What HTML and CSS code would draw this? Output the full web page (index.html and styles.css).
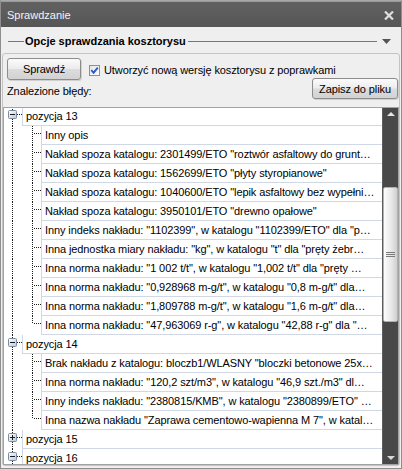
FILE: index.html
```html
<!DOCTYPE html>
<html lang="pl">
<head>
<meta charset="utf-8">
<title>Sprawdzanie</title>
<link rel="stylesheet" href="styles.css">
</head>
<body>
<div class="window">
  <div class="titlebar">
    <span class="title">Sprawdzanie</span>
    <svg class="close" width="10" height="9" viewBox="0 0 10 9"><path d="M1 0.5L9 8.5M9 0.5L1 8.5" stroke="#dedede" stroke-width="2.2"/></svg>
  </div>
  <div class="content">
    <div class="group-head">
      <span class="gline short"></span>
      <span class="gtitle">Opcje sprawdzania kosztorysu</span>
      <span class="gline long"></span>
      <svg class="garrow" width="9" height="5" viewBox="0 0 9 5"><path d="M0 0H9L4.5 5Z" fill="#555"/></svg>
    </div>
    <div class="panel">
      <div class="toolbar">
        <button class="btn btn-check">Sprawdź</button>
        <label class="chk">
          <span class="box"><svg width="9" height="9" viewBox="0 0 9 9"><path d="M1.3 4.2L3.6 6.7L7.8 1.6" fill="none" stroke="#2a5cc4" stroke-width="1.9"/></svg></span>
          <span>Utworzyć nową wersję kosztorysu z poprawkami</span>
        </label>
      </div>
      <div class="row2">
        <span class="found">Znalezione błędy:</span>
        <button class="btn btn-save">Zapisz do pliku</button>
      </div>
      <div class="tree">
        <div class="rows-clip">
          <div class="rows">
            <div class="row"><span class="g0 node"><svg class="exp" width="9" height="9" viewBox="0 0 9 9"><defs><linearGradient id="e1" x1="0" y1="0" x2="1" y2="1"><stop offset="0" stop-color="#fff"/><stop offset="1" stop-color="#bcc7d5"/></linearGradient></defs><rect x=".5" y=".5" width="8" height="8" rx="1" fill="url(#e1)" stroke="#7b8ca3"/><path d="M2 4.5h5" stroke="#1a1a1a"/></svg></span><span class="cell">pozycja 13</span></div>
            <div class="row"><span class="g0"></span><span class="g1"></span><span class="cell">Inny opis</span></div>
            <div class="row"><span class="g0"></span><span class="g1"></span><span class="cell">Nakład spoza katalogu: 2301499/ETO "roztwór asfaltowy do grunt…</span></div>
            <div class="row"><span class="g0"></span><span class="g1"></span><span class="cell">Nakład spoza katalogu: 1562699/ETO "płyty styropianowe"</span></div>
            <div class="row"><span class="g0"></span><span class="g1"></span><span class="cell">Nakład spoza katalogu: 1040600/ETO "lepik asfaltowy bez wypełni…</span></div>
            <div class="row"><span class="g0"></span><span class="g1"></span><span class="cell">Nakład spoza katalogu: 3950101/ETO "drewno opałowe"</span></div>
            <div class="row"><span class="g0"></span><span class="g1"></span><span class="cell">Inny indeks nakładu: "1102399", w katalogu "1102399/ETO" dla "p…</span></div>
            <div class="row"><span class="g0"></span><span class="g1"></span><span class="cell">Inna jednostka miary nakładu: "kg", w katalogu "t" dla "pręty żebr…</span></div>
            <div class="row"><span class="g0"></span><span class="g1"></span><span class="cell">Inna norma nakładu: "1 002 t/t", w katalogu "1,002 t/t" dla "pręty …</span></div>
            <div class="row"><span class="g0"></span><span class="g1"></span><span class="cell">Inna norma nakładu: "0,928968 m-g/t", w katalogu "0,8 m-g/t" dla…</span></div>
            <div class="row"><span class="g0"></span><span class="g1"></span><span class="cell">Inna norma nakładu: "1,809788 m-g/t", w katalogu "1,6 m-g/t" dla…</span></div>
            <div class="row"><span class="g0"></span><span class="g1 last"></span><span class="cell">Inna norma nakładu: "47,963069 r-g", w katalogu "42,88 r-g" dla "…</span></div>
            <div class="row"><span class="g0 node"><svg class="exp" width="9" height="9" viewBox="0 0 9 9"><defs><linearGradient id="e2" x1="0" y1="0" x2="1" y2="1"><stop offset="0" stop-color="#fff"/><stop offset="1" stop-color="#bcc7d5"/></linearGradient></defs><rect x=".5" y=".5" width="8" height="8" rx="1" fill="url(#e2)" stroke="#7b8ca3"/><path d="M2 4.5h5" stroke="#1a1a1a"/></svg></span><span class="cell">pozycja 14</span></div>
            <div class="row"><span class="g0"></span><span class="g1"></span><span class="cell">Brak nakładu z katalogu: bloczb1/WLASNY "bloczki betonowe 25x2…</span></div>
            <div class="row"><span class="g0"></span><span class="g1"></span><span class="cell">Inna norma nakładu: "120,2 szt/m3", w katalogu "46,9 szt./m3" dl…</span></div>
            <div class="row"><span class="g0"></span><span class="g1"></span><span class="cell">Inny indeks nakładu: "2380815/KMB", w katalogu "2380899/ETO" …</span></div>
            <div class="row"><span class="g0"></span><span class="g1 last"></span><span class="cell">Inna nazwa nakładu "Zaprawa cementowo-wapienna M 7", w katal…</span></div>
            <div class="row"><span class="g0 node"><svg class="exp" width="9" height="9" viewBox="0 0 9 9"><defs><linearGradient id="e3" x1="0" y1="0" x2="1" y2="1"><stop offset="0" stop-color="#fff"/><stop offset="1" stop-color="#bcc7d5"/></linearGradient></defs><rect x=".5" y=".5" width="8" height="8" rx="1" fill="url(#e3)" stroke="#7b8ca3"/><path d="M2 4.5h5M4.5 2v5" stroke="#1a1a1a"/></svg></span><span class="cell">pozycja 15</span></div>
            <div class="row"><span class="g0 node"><svg class="exp" width="9" height="9" viewBox="0 0 9 9"><defs><linearGradient id="e4" x1="0" y1="0" x2="1" y2="1"><stop offset="0" stop-color="#fff"/><stop offset="1" stop-color="#bcc7d5"/></linearGradient></defs><rect x=".5" y=".5" width="8" height="8" rx="1" fill="url(#e4)" stroke="#7b8ca3"/><path d="M2 4.5h5" stroke="#1a1a1a"/></svg></span><span class="cell">pozycja 16</span></div>
          </div>
        </div>
        <div class="scrollbar">
          <div class="sb-btn sb-up"><span class="tri-up"></span></div>
          <div class="sb-space1"></div>
          <div class="sb-thumb"><span class="grip"></span></div>
          <div class="sb-space2"></div>
          <div class="sb-btn sb-down"><span class="tri-down"></span></div>
        </div>
      </div>
    </div>
  </div>
</div>
</body>
</html>
```
FILE: styles.css
```css
* { box-sizing: border-box; }
html, body { margin: 0; padding: 0; }
body {
  width: 402px;
  height: 469px;
  overflow: hidden;
  background: #efefef;
  font-family: "Liberation Sans", Arial, sans-serif;
  font-size: 11px;
  letter-spacing: -0.1px;
  color: #000;
}
.window {
  width: 402px;
  height: 469px;
  border: 1px solid #8e8e8e;
  border-top-color: #a8a8a8;
  display: flex;
  flex-direction: column;
  background: #efefef;
}
.titlebar {
  flex: none;
  height: 26px;
  border-top: 1px solid #9a9a9a;
  background: linear-gradient(#616161, #565656);
  display: flex;
  align-items: center;
  justify-content: space-between;
  padding: 0 7px 0 6px;
  color: #f3f3f3;
  font-size: 11px;
  letter-spacing: 0;
}
.close { display: block; margin-top: 1px; }
.content {
  flex: 1;
  min-height: 0;
  display: flex;
  flex-direction: column;
  padding: 0 1px 2px 1px;
}
.group-head {
  flex: none;
  height: 26px;
  padding: 2px 0 0 6px;
  display: flex;
  align-items: center;
}
.gline { height: 1px; background: #777; }
.gline.short { width: 16px; }
.gline.long { flex: 1; }
.gtitle {
  font-weight: bold;
  padding: 0 2px 0 1px;
  letter-spacing: 0;
}
.garrow { display: block; margin: 1px 9px 0 5px; }
.panel {
  flex: 1;
  min-height: 0;
  display: flex;
  flex-direction: column;
  border: 1px solid #c4c4c4;
  border-radius: 3px;
  padding-top: 4px;
}
.toolbar {
  flex: none;
  height: 20px;
  display: flex;
  align-items: flex-start;
  padding-left: 4px;
}
.btn {
  font-family: inherit;
  font-size: 11px;
  letter-spacing: -0.1px;
  color: #000;
  padding: 0;
  border: 1px solid #8c8c8c;
  border-radius: 3px;
  background: linear-gradient(#fbfbfb 0%, #ececec 48%, #dcdcdc 52%, #d2d2d2 100%);
  box-shadow: 1px 1px 0 rgba(0,0,0,0.13);
}
.btn-check { width: 74px; height: 22px; flex: none; }
.chk {
  margin: 7px 0 0 8px;
  display: flex;
  align-items: center;
  gap: 4px;
  line-height: 11px;
}
.box {
  width: 11px;
  height: 11px;
  border: 1px solid #8f8f8f;
  background: linear-gradient(135deg, #e4e4e4, #ffffff);
  display: flex;
  align-items: center;
  justify-content: center;
}
.box svg { display: block; }
.row2 {
  flex: none;
  height: 29px;
  display: flex;
  justify-content: space-between;
  align-items: flex-start;
  padding: 0 1px 0 4px;
}
.found { margin-top: 6px; line-height: 14px; }
.btn-save { width: 86px; height: 21px; flex: none; }
.tree {
  flex: 1;
  min-height: 0;
  display: flex;
  border: 1px solid #a3a3a3;
  background: #fff;
}
.rows-clip { flex: 1; min-width: 0; overflow: hidden; }
.rows { margin-top: -1px; }
.row { display: flex; height: 19px; }
.g0, .g1 { flex: none; height: 19px; background-repeat: no-repeat; }
.g0 {
  width: 18px;
  background-image: repeating-linear-gradient(to bottom, #1e1e1e 0 1px, transparent 1px 2px);
  background-position: 8px 0;
  background-size: 1px 100%;
}
.g0.node {
  background-image:
    repeating-linear-gradient(to bottom, #1e1e1e 0 1px, transparent 1px 2px),
    repeating-linear-gradient(to right, #1e1e1e 0 1px, transparent 1px 2px);
  background-position: 8px 0, 13px 7px;
  background-size: 1px 100%, 5px 1px;
}
.exp { display: block; margin: 3px 0 0 4px; }
.g1 {
  width: 19px;
  background-image:
    repeating-linear-gradient(to bottom, #1e1e1e 0 1px, transparent 1px 2px),
    repeating-linear-gradient(to right, #1e1e1e 0 1px, transparent 1px 2px);
  background-position: 10px 0, 12px 7px;
  background-size: 1px 100%, 7px 1px;
}
.g1.last { background-size: 1px 8px, 7px 1px; }
.cell {
  flex: 1;
  min-width: 0;
  height: 19px;
  border-left: 1px solid #d0d8e6;
  border-bottom: 1px solid #d0d8e6;
  padding: 0 4px 0 3px;
  line-height: 18px;
  white-space: nowrap;
  overflow: hidden;
  text-overflow: ellipsis;
}
.scrollbar {
  flex: none;
  width: 16px;
  background: #484848;
  border-left: 1px solid #5c5c5c;
  display: flex;
  flex-direction: column;
}
.sb-btn { flex: none; height: 17px; display: flex; justify-content: center; }
.sb-up { align-items: flex-start; padding-top: 4px; }
.sb-down { align-items: flex-end; padding-bottom: 4px; }
.tri-up {
  width: 0; height: 0;
  border-left: 4px solid transparent;
  border-right: 4px solid transparent;
  border-bottom: 4px solid #e4e4e4;
}
.tri-down {
  width: 0; height: 0;
  border-left: 4px solid transparent;
  border-right: 4px solid transparent;
  border-top: 4px solid #d8d8d8;
}
.sb-space1 { flex: none; height: 62px; }
.sb-thumb {
  flex: none;
  height: 135px;
  border: 1px solid #b0b0b0;
  border-radius: 2px;
  background: linear-gradient(to right, #fdfdfd, #e6e6e6 60%, #cfcfcf);
  display: flex;
  align-items: center;
  justify-content: center;
}
.grip {
  width: 9px;
  height: 5px;
  border-top: 1px solid #7a7a7a;
  border-bottom: 1px solid #7a7a7a;
  background: linear-gradient(#7a7a7a, #7a7a7a) center / 100% 1px no-repeat;
}
.sb-space2 { flex: 1; }
```
